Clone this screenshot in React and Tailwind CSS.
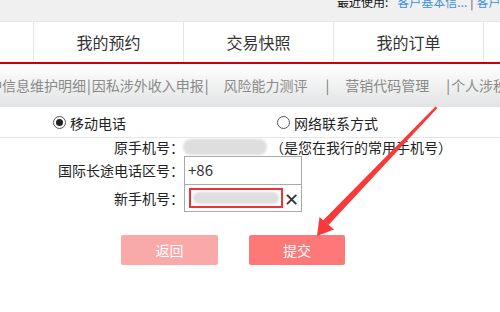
const font = { fontFamily: '"Noto Sans CJK SC", "Noto Sans", sans-serif' };

const Radio = ({ checked, label }) => (
  <div className="flex items-center gap-[4px]">
    <span className="flex h-[13px] w-[13px] items-center justify-center rounded-full border border-[#555] bg-white">
      {checked && <span className="h-[7px] w-[7px] rounded-full bg-[#222]" />}
    </span>
    <span className="text-[14px] leading-[18px] text-[#222]">{label}</span>
  </div>
);

const Blur = ({ className }) => (
  <div className={`rounded-full bg-[#dedede] blur-[1px] ${className}`} />
);

export default function App() {
  return (
    <div className="relative h-[312px] w-[500px] overflow-hidden bg-white" style={font}>
      {/* recent bar */}
      <div className="h-[21px] overflow-hidden bg-[#f0f0f0]">
        <div className="-mt-[6px] flex whitespace-nowrap pl-[337px] text-[12px] leading-[16px]">
          <span className="text-[#111]">最近使用:</span>
          <span className="ml-[9px] text-[#3c8fdd]">客户基本信...</span>
          <span className="mx-[3px] text-[#7a1c6c]">|</span>
          <span className="text-[#3c8fdd]">客户基本信息</span>
        </div>
      </div>

      {/* main nav */}
      <div className="flex h-[41px] border-t border-[#e6e6e6] text-[16px] text-[#333]">
        <div className="w-[34px] shrink-0 border-r border-[#e6e6e6]" />
        {["我的预约", "交易快照", "我的订单"].map((t) => (
          <div
            key={t}
            className="flex w-[150px] shrink-0 items-center justify-center border-r border-[#e6e6e6]"
          >
            {t}
          </div>
        ))}
      </div>
      <div className="h-[2px] bg-[#c8000b]" />

      {/* sub nav */}
      <div className="flex h-[43px] items-center overflow-hidden whitespace-nowrap bg-gradient-to-b from-white to-[#e2e3e4] text-[14px] text-[#8a8a8a]">
        <span className="-ml-[12px]">护信息维护明细</span>
        <span className="mx-[1px] text-[#777]">|</span>
        <span>因私涉外收入申报</span>
        <span className="mx-[1px] text-[#777]">|</span>
        <span className="ml-[14px]">风险能力测评</span>
        <span className="ml-[18px] text-[#777]">|</span>
        <span className="ml-[16px]">营销代码管理</span>
        <span className="ml-[17px] text-[#777]">|</span>
        <span className="ml-[1px]">个人涉税信息</span>
      </div>

      {/* contact type */}
      <div className="flex h-[31px] items-center border-b border-[#e6e6e6] pt-[1px]">
        <div className="ml-[53px]">
          <Radio checked label="移动电话" />
        </div>
        <div className="ml-[151px]">
          <Radio label="网络联系方式" />
        </div>
      </div>

      {/* form */}
      <div className="text-[14px] text-[#222]">
        <div className="flex h-[18px] items-center">
          <div className="w-[184px] shrink-0 text-right">原手机号：</div>
          <Blur className="-ml-[1px] h-[16px] w-[84px]" />
          <span className="ml-[3px]">（是您在我行的常用手机号）</span>
        </div>
        <div className="flex items-center">
          <div className="w-[184px] shrink-0 text-right">国际长途电话区号：</div>
          <div className="flex h-[29px] w-[118px] items-center border border-[#a9a9a9] pl-[3px] text-[15px] text-[#333]">
            +86
          </div>
        </div>
        <div className="flex items-center">
          <div className="w-[184px] shrink-0 text-right">新手机号：</div>
          <div className="flex h-[27px] w-[118px] items-center border border-t-0 border-[#a9a9a9] pl-[4px]">
            <div className="flex h-[20px] w-[94px] items-center border-2 border-[#ee3337] px-[2px]">
              <Blur className="h-[12px] w-full" />
            </div>
            <span className="ml-[1px] text-[18px] leading-none text-[#333]">✕</span>
          </div>
        </div>
      </div>

      {/* actions */}
      <div className="mt-[23px] flex pl-[121px] text-[14px] text-white">
        <button className="flex h-[30px] w-[97px] items-center justify-center rounded-[2px] bg-[#faa9a9]">
          返回
        </button>
        <button className="ml-[31px] flex h-[30px] w-[96px] items-center justify-center rounded-[2px] bg-[#ff7878]">
          提交
        </button>
      </div>

      {/* annotation arrow */}
      <svg className="pointer-events-none absolute left-0 top-0" width="500" height="312">
        <polygon points="435.5,106.5 437.5,108 328.5,225 323,220.5" fill="#f63a3a" />
        <polygon points="317,236 319.5,217 334,229.5" fill="#f63a3a" />
      </svg>
    </div>
  );
}
